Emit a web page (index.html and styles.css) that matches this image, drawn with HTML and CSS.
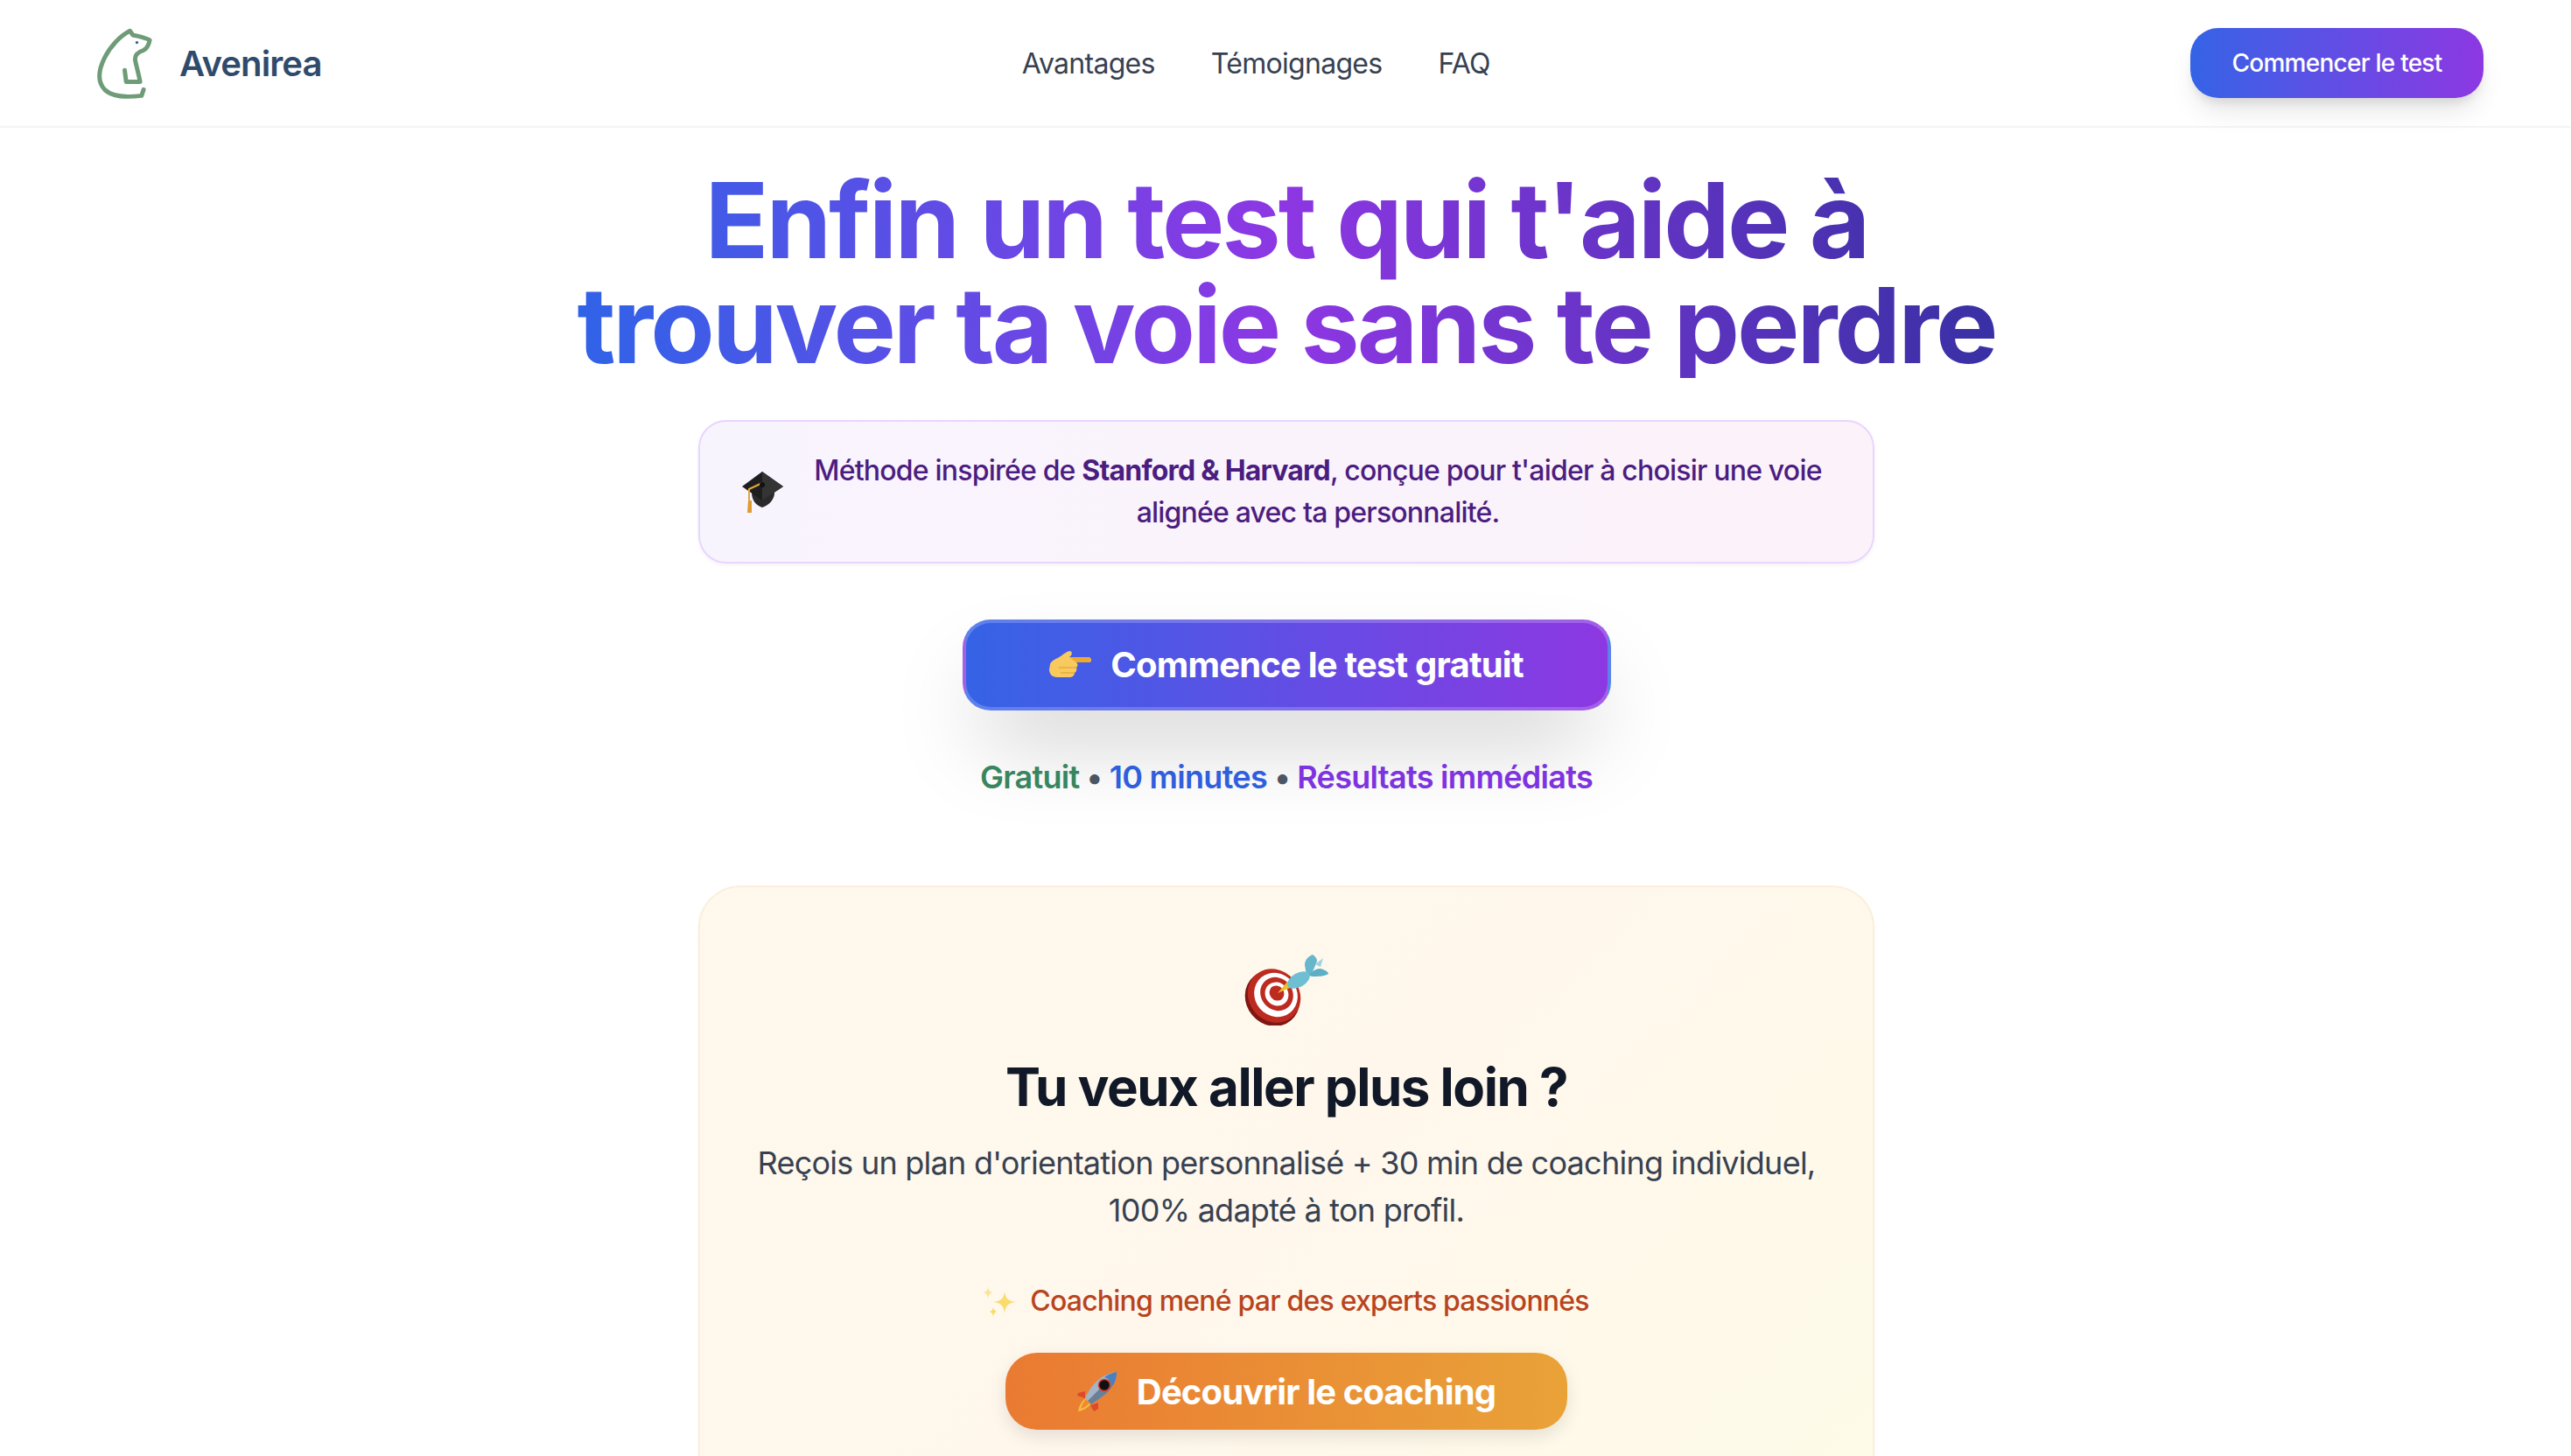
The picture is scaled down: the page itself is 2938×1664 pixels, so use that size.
FILE: index.html
```html
<!DOCTYPE html>
<html lang="fr">
<head>
    <meta charset="UTF-8">
    <meta name="viewport" content="width=device-width, initial-scale=1.0">
    <title>Avenirea</title>
    <link rel="stylesheet" href="styles.css">
</head>
<body>
    <header class="site-header">
        <a class="brand" href="#">
            <svg class="brand-logo" viewBox="150 90 200 250" fill="none">
                <path d="M312 305 L305 326 C265 331 205 332 178 305 C150 275 158 235 178 195 C198 155 232 120 265 103 L275 117 C295 122 318 126 333 135 C330 150 325 163 311 170 C292 176 281 186 283 203 C287 225 295 250 300 278 L252 278 L247 238" stroke="#6f9c78" stroke-width="15" stroke-linecap="round" stroke-linejoin="round"/>
                <circle cx="289" cy="143" r="5" fill="#2f5d9a"/>
            </svg>
            <span class="brand-name">Avenirea</span>
        </a>
        <nav class="main-nav">
            <a href="#">Avantages</a>
            <a href="#">Témoignages</a>
            <a href="#">FAQ</a>
        </nav>
        <a class="nav-cta" href="#">Commencer le test</a>
    </header>

    <main class="hero">
        <h1 class="hero-title">Enfin un test qui t'aide à<br>trouver ta voie sans te perdre</h1>

        <div class="notice">
            <svg class="notice-icon" viewBox="0 0 48 47">
                <path d="M11 24 L37 24 C37 32 31 38 23 41 C15 38 11 32 11 24Z" fill="#2b2a2a"/>
                <path d="M23 0 L47 17 L23 33 L0 17Z" fill="#1f1e1e"/>
                <path d="M23 0 L47 17 L23 33Z" fill="#353434"/>
                <path d="M23 13 L8 20 L8 35" fill="none" stroke="#e3a63c" stroke-width="2"/>
                <path d="M7 33 L11 33 L11 47 L6 47Z" fill="#e09a2e"/>
                <circle cx="23" cy="15" r="3" fill="#111"/>
            </svg>
            <p class="notice-text">Méthode inspirée de <strong>Stanford &amp; Harvard</strong>, conçue pour t'aider à choisir une voie alignée avec ta personnalité.</p>
        </div>

        <a class="main-cta" href="#">
            <svg class="hand-icon" viewBox="0 0 48 30">
                <path d="M1 15 C3 10 9 9 13 6 C17 3 21 0 24 0 C27 1 26 5 23 7 L45 7 C49 8 49 13 45 13 L31 13 C33 15 33 17 31 19 C32 21 31 24 29 25 C29 28 26 30 23 30 L9 30 C3 30 0 26 0 21Z" fill="#f8ca5e"/>
                <path d="M23 7 L45 7 C48 8 48 11 46 13 L31 13 C29 11 26 10 23 7Z" fill="#eda92f"/>
                <path d="M11 19 L31 19 M13 25 L29 25" stroke="#dd9a30" stroke-width="1"/>
            </svg>
            <span>Commence le test gratuit</span>
        </a>

        <p class="perks"><span class="perk-green">Gratuit</span> <span class="perk-dot">•</span> <span class="perk-blue">10 minutes</span> <span class="perk-dot">•</span> <span class="perk-purple">Résultats immédiats</span></p>

        <section class="coaching">
            <svg class="target-icon" viewBox="0 0 96 81">
                <ellipse cx="32" cy="50" rx="30" ry="33" transform="rotate(-40 32 50)" fill="#7d1712"/>
                <ellipse cx="34" cy="47" rx="29" ry="32" transform="rotate(-40 34 47)" fill="#bd2a20"/>
                <ellipse cx="36" cy="46" rx="24" ry="26" transform="rotate(-40 36 46)" fill="#fff"/>
                <ellipse cx="37" cy="45" rx="18" ry="20" transform="rotate(-40 37 45)" fill="#bd2a20"/>
                <ellipse cx="37" cy="45" rx="13" ry="14" transform="rotate(-40 37 45)" fill="#fff"/>
                <ellipse cx="37" cy="44" rx="8" ry="9" transform="rotate(-40 37 44)" fill="#bd2a20"/>
                <path d="M38 44 L49 31 L54 37Z" fill="#ecc02c"/>
                <path d="M69 12 C69 6 73 2 78 0 C83 3 84 7 82 10 C80 15 78 20 75 24 L71 23Z" fill="#66b7cc"/>
                <path d="M73 24 C77 19 84 14 90 17 C93 18 96 20 96 22 C91 25 84 25 78 25Z" fill="#5dafc6"/>
                <path d="M81 11 L90 4 L87 14Z" fill="#9ed3df"/>
                <ellipse cx="62" cy="29" rx="14" ry="8" transform="rotate(-30 62 29)" fill="#6fbfd2"/>
            </svg>
            <h2 class="coaching-title">Tu veux aller plus loin ?</h2>
            <p class="coaching-text">Reçois un plan d'orientation personnalisé + 30 min de coaching individuel, 100% adapté à ton profil.</p>
            <p class="coaching-note">
                <svg class="sparkle-icon" viewBox="0 0 37 35">
                    <path d="M24 6 C25 14 28 17 37 18 C28 19 25 22 24 31 C23 22 20 19 11 18 C20 17 23 14 24 6Z" fill="#f8dc6c"/>
                    <path d="M5 0 C5.500 5 7 6 10 7 C7 8 5.500 10 5 14 C4.500 10 3 8 0 7 C3 6 4.500 5 5 0Z" fill="#fae596"/>
                    <path d="M11 24 C11.500 27 13 28 15 29 C13 30 11.500 31 11 35 C10.500 31 9 30 7 29 C9 28 10.500 27 11 24Z" fill="#f8dc6c"/>
                </svg>
                <span>Coaching mené par des experts passionnés</span>
            </p>
            <a class="coaching-cta" href="#">
                <svg class="rocket-icon" viewBox="0 0 46 45">
                    <path d="M9 22 L1 24 L0 27 L9 30Z M24 35 L24 42 L19 45 L15 38Z" fill="#e0492c"/>
                    <path d="M10 30 C5 33 2 39 1 45 C7 44 12 41 15 37Z" fill="#f6c044"/>
                    <path d="M10 31 C7 34 5 38 4 42 C8 41 11 38 14 36Z" fill="#f08a2c"/>
                    <path d="M45 0 C33 1 23 8 15 19 L9 29 L16 37 L26 30 C37 23 45 13 45 0Z" fill="#a3b4c6"/>
                    <path d="M45 0 C45 13 37 23 26 30 L16 37 L12 33Z" fill="#6a7f98"/>
                    <path d="M45 0 C40 1 35 3 31 6 C35 7 39 11 41 15 C44 10 45 5 45 0Z" fill="#4a7fc0"/>
                    <circle cx="31" cy="15" r="6.500" fill="#111" stroke="#d8382a" stroke-width="1.500"/>
                </svg>
                <span>Découvrir le coaching</span>
            </a>
        </section>
    </main>
</body>
</html>
```

FILE: styles.css
```css
* {
    box-sizing: border-box;
}
html, body {
    height: 100%;
}
body {
    margin: 0;
    font-family: "Inter", "Liberation Sans", sans-serif;
    background-color: #ffffff;
    overflow: hidden;
}
a {
    text-decoration: none;
}
p, h1, h2 {
    margin: 0;
}

.site-header {
    display: flex;
    justify-content: space-between;
    align-items: center;
    height: 146px;
    padding: 0 100px;
    border-bottom: 2px solid #f3f4f6;
}
.brand {
    display: flex;
    align-items: center;
    gap: 28px;
}
.brand-logo {
    width: 67px;
    height: 83px;
    margin-left: 10px;
}
.brand-name {
    font-size: 40px;
    font-weight: 600;
    letter-spacing: -0.9px;
    color: #2f4b6c;
}
.main-nav {
    display: flex;
    gap: 64px;
}
.main-nav a {
    font-size: 32px;
    font-weight: 400;
    letter-spacing: -0.7px;
    color: #374151;
}
.nav-cta {
    display: flex;
    align-items: center;
    justify-content: center;
    width: 335px;
    height: 80px;
    border-radius: 32px;
    background: linear-gradient(90deg, #3563e6, #8d38e2);
    box-shadow: 0 20px 30px -6px rgba(0, 0, 0, 0.1), 0 8px 12px -4px rgba(0, 0, 0, 0.1);
    font-size: 28px;
    font-weight: 500;
    letter-spacing: -0.75px;
    color: #fff;
}

.hero {
    display: flex;
    flex-direction: column;
    align-items: center;
}
.hero-title {
    width: fit-content;
    margin-top: 46px;
    margin-left: 2px;
    font-size: 120px;
    font-weight: 700;
    line-height: 120px;
    letter-spacing: -3px;
    text-align: center;
    background: linear-gradient(85deg, #2f63e8, #8d37e3 50%, #3730a3);
    -webkit-background-clip: text;
    background-clip: text;
    color: transparent;
}

.notice {
    display: flex;
    align-items: center;
    gap: 32px;
    width: 1344px;
    margin-top: 48px;
    margin-left: 2px;
    padding: 32px 56px 32px 48px;
    border: 2px solid #e9d5ff;
    border-radius: 32px;
    background: linear-gradient(90deg, #f8f4fe, #fcf2f9);
    box-shadow: 0 2px 4px rgba(0, 0, 0, 0.05);
}
.notice-icon {
    flex: none;
    width: 48px;
    height: 47px;
}
.notice-text {
    flex: 1;
    font-size: 32px;
    font-weight: 500;
    line-height: 48px;
    letter-spacing: -0.8px;
    text-align: center;
    color: #4c1d80;
}
.notice-text strong {
    font-weight: 700;
}

.main-cta {
    display: flex;
    align-items: center;
    justify-content: center;
    gap: 22px;
    width: 741px;
    height: 104px;
    margin-top: 64px;
    margin-left: 2px;
    padding-bottom: 2px;
    border: 4px solid rgba(255, 255, 255, 0.2);
    border-radius: 32px;
    background: linear-gradient(90deg, #3563e6, #8d38e2);
    box-shadow: 0 50px 100px -24px rgba(0, 0, 0, 0.25);
    font-size: 40px;
    font-weight: 700;
    letter-spacing: -0.8px;
    color: #fff;
}
.hand-icon {
    width: 48px;
    height: 30px;
}

.perks {
    margin-top: 50px;
    margin-left: 2px;
    font-size: 36px;
    font-weight: 600;
    line-height: 52px;
    letter-spacing: -0.7px;
    color: #4b5563;
}
.perk-green {
    color: #38855f;
}
.perk-blue {
    color: #2f5fdc;
}
.perk-purple {
    color: #7e33e0;
}

.coaching {
    display: flex;
    flex-direction: column;
    align-items: center;
    width: 1344px;
    margin-top: 98px;
    margin-left: 2px;
    padding: 77px 48px 96px;
    border: 2px solid #fbefdb;
    border-radius: 48px;
    background: linear-gradient(135deg, #fef9ec, #fff7ec 50%, #fefbe8);
    box-shadow: 0 2px 4px rgba(0, 0, 0, 0.03);
}
.target-icon {
    width: 96px;
    height: 81px;
}
.coaching-title {
    margin-top: 34px;
    font-size: 60px;
    font-weight: 700;
    line-height: 72px;
    letter-spacing: -1.5px;
    color: #111827;
}
.coaching-text {
    margin-top: 24px;
    font-size: 36px;
    line-height: 54px;
    letter-spacing: -0.75px;
    text-align: center;
    color: #374151;
}
.coaching-note {
    display: flex;
    align-items: center;
    gap: 16px;
    margin-top: 53px;
    font-size: 32px;
    font-weight: 500;
    line-height: 48px;
    letter-spacing: -0.8px;
    color: #b8441e;
}
.sparkle-icon {
    width: 37px;
    height: 35px;
}
.coaching-cta {
    display: flex;
    align-items: center;
    justify-content: center;
    gap: 22px;
    width: 642px;
    height: 88px;
    margin-top: 35px;
    border-radius: 36px;
    background: linear-gradient(90deg, #ea7a32, #e9a238);
    box-shadow: 0 8px 20px rgba(0, 0, 0, 0.1);
    font-size: 40px;
    font-weight: 700;
    letter-spacing: -0.85px;
    color: #fff;
}
.rocket-icon {
    width: 46px;
    height: 45px;
}
```
